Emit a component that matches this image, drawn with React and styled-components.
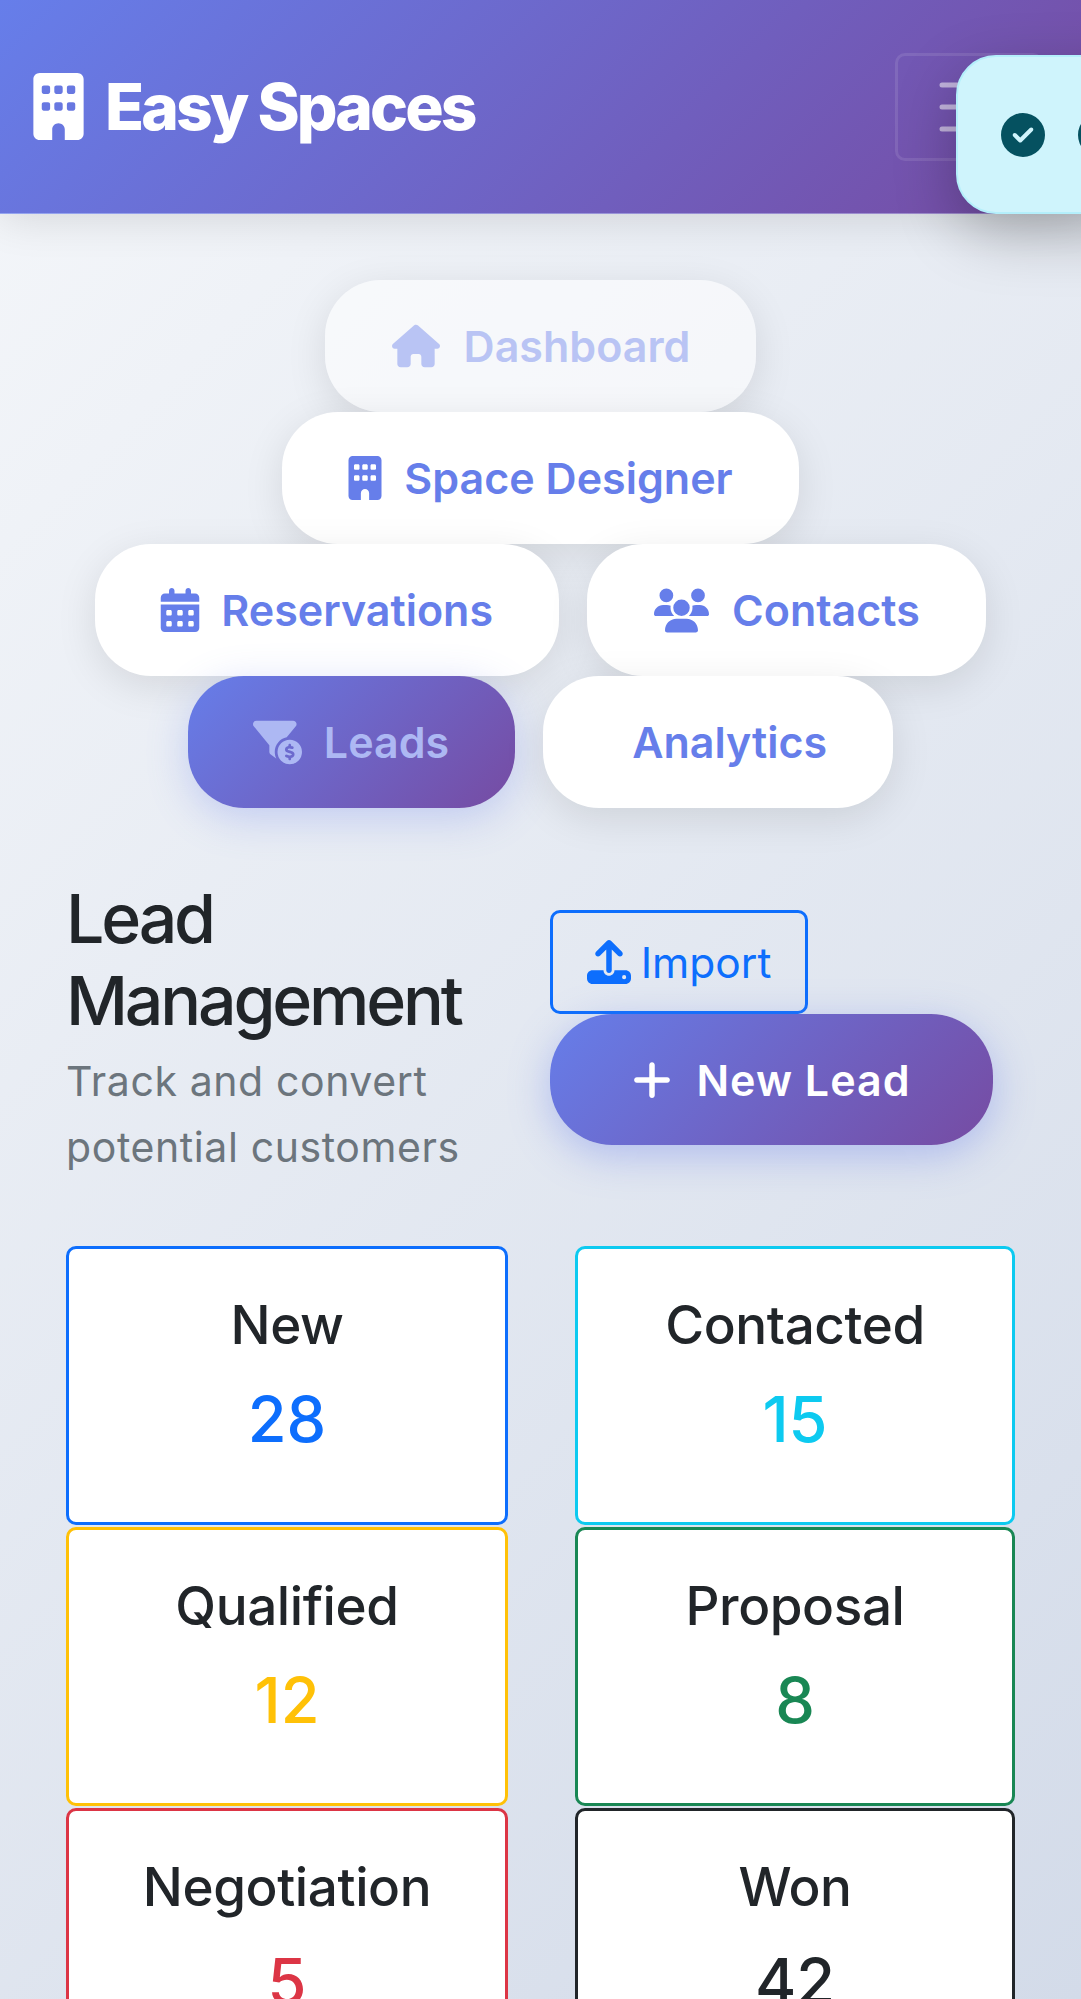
import React from 'react';
import styled, { createGlobalStyle } from 'styled-components';
import {
    FaBuilding,
    FaHouse,
    FaCalendarDays,
    FaUsers,
    FaFilterCircleDollar,
    FaUpload,
    FaPlus,
    FaCircleCheck,
} from 'react-icons/fa6';

const NAV_ITEMS = [
    { label: 'Dashboard', icon: <FaHouse />, state: 'fading', width: 50, size: 48 },
    { label: 'Space Designer', icon: <FaBuilding />, width: 33, size: 44 },
    { label: 'Reservations', icon: <FaCalendarDays />, width: 37, size: 44 },
    { label: 'Contacts', icon: <FaUsers />, width: 56, size: 55 },
    { label: 'Leads', icon: <FaFilterCircleDollar />, state: 'active', width: 47, size: 49 },
    { label: 'Analytics', icon: null, width: 0, size: 0 },
];

const STATS = [
    { label: 'New', value: 28, color: '#0d6efd' },
    { label: 'Contacted', value: 15, color: '#0dcaf0' },
    { label: 'Qualified', value: 12, color: '#ffc107' },
    { label: 'Proposal', value: 8, color: '#198754' },
    { label: 'Negotiation', value: 5, color: '#dc3545' },
    { label: 'Won', value: 42, color: '#212529' },
];

export default function App() {
    return (
        <Page>
            <GlobalStyle />
            <Header>
                <Brand><FaBuilding /><span>Easy Spaces</span></Brand>
                <Toggler>
                    <svg width="60" height="50" viewBox="0 0 60 50">
                        <path d="M3 3h54M3 25h54M3 47h54" stroke="rgba(255,255,255,.55)" strokeWidth="5" strokeLinecap="round" />
                    </svg>
                </Toggler>
                <Toast>
                    <FaCircleCheck />
                    <FaCircleCheck />
                </Toast>
            </Header>
            <Main>
                <Nav>
                    {NAV_ITEMS.map((item) => (
                        <Pill key={item.label} $state={item.state}>
                            <PillIcon $width={item.width} $size={item.size}>{item.icon}</PillIcon>
                            {item.label}
                        </Pill>
                    ))}
                </Nav>
                <TitleRow>
                    <div>
                        <Title>Lead Management</Title>
                        <Subtitle>Track and convert potential customers</Subtitle>
                    </div>
                    <Actions>
                        <ImportButton><FaUpload />Import</ImportButton>
                        <NewButton><FaPlus />New Lead</NewButton>
                    </Actions>
                </TitleRow>
                <Stats>
                    {STATS.map((stat) => (
                        <StatCard key={stat.label} $color={stat.color}>
                            <StatLabel>{stat.label}</StatLabel>
                            <StatValue $color={stat.color}>{stat.value}</StatValue>
                        </StatCard>
                    ))}
                </Stats>
            </Main>
        </Page>
    );
}

const GlobalStyle = createGlobalStyle`
    html, body {
        margin: 0;
        padding: 0;
    }
    * {
        box-sizing: border-box;
    }
`;
const Page = styled.div`
    position: relative;
    height: 1999px;
    overflow: hidden;
    font-family: 'Inter', 'Liberation Sans', sans-serif;
    color: #212529;
    background: linear-gradient(135deg, #f5f7fa 0%, #d3dbe9 100%);
`;
const Header = styled.header`
    position: relative;
    height: 214px;
    padding: 0 38px 0 33px;
    display: flex;
    align-items: center;
    justify-content: space-between;
    background: linear-gradient(135deg, #667eea 0%, #764ba2 100%);
    border-bottom: 1px solid rgba(255, 255, 255, 0.3);
    box-shadow: 0 5px 40px rgba(0, 0, 0, 0.12);
`;
const Brand = styled.div`
    display: flex;
    align-items: center;
    gap: 13px;
    color: #fff;
    font-size: 64px;
    font-weight: 800;
    letter-spacing: -2.9px;
    svg {
        height: 67px;
        width: 67px;
        margin-left: -8px;
    }
`;
const Toggler = styled.div`
    width: 148px;
    height: 108px;
    display: flex;
    align-items: center;
    justify-content: center;
    border: 3px solid rgba(255, 255, 255, 0.1);
    border-radius: 10px;
`;
const Toast = styled.div`
    position: absolute;
    top: 55px;
    left: 956px;
    width: 400px;
    height: 159px;
    padding-left: 43px;
    display: flex;
    align-items: center;
    gap: 33px;
    background: #cff4fc;
    border: 2px solid #b4effb;
    border-radius: 40px;
    color: #055160;
    font-size: 44px;
    box-shadow: 0 20px 60px rgba(0, 0, 0, 0.25);
    svg {
        flex: none;
    }
`;
const Main = styled.main`
    padding: 66px 66px 0;
`;
const Nav = styled.nav`
    display: flex;
    flex-wrap: wrap;
    justify-content: center;
    column-gap: 28px;
`;
const Pill = styled.a`
    height: 132px;
    padding: 0 66px;
    display: flex;
    align-items: center;
    border-radius: 56px;
    font-size: 43px;
    font-weight: 600;
    color: ${(p) => (p.$state === 'fading' ? '#b9c4f4' : p.$state === 'active' ? '#adb8f3' : '#667eea')};
    background: ${(p) => (p.$state === 'fading'
        ? 'rgba(255, 255, 255, 0.55)'
        : p.$state === 'active'
            ? 'linear-gradient(135deg, #667eea 0%, #764ba2 100%)'
            : '#fff')};
    box-shadow: ${(p) => (p.$state === 'active'
        ? '0 10px 40px rgba(102, 126, 234, 0.3)'
        : '0 10px 40px rgba(0, 0, 0, 0.1)')};
`;
const PillIcon = styled.span`
    width: ${(p) => p.$width}px;
    margin-right: 23px;
    display: flex;
    align-items: center;
    justify-content: center;
    svg {
        flex: none;
        width: ${(p) => p.$size}px;
        height: ${(p) => p.$size}px;
    }
`;
const TitleRow = styled.section`
    margin-top: 69px;
    display: flex;
    align-items: center;
    justify-content: space-between;
`;
const Title = styled.h2`
    width: 440px;
    margin: 0 0 7px;
    font-size: 68px;
    font-weight: 500;
    line-height: 82px;
    letter-spacing: -3.2px;
`;
const Subtitle = styled.p`
    width: 440px;
    margin: 0;
    font-size: 41px;
    line-height: 66px;
    letter-spacing: 0.6px;
    color: #6c757d;
`;
const Actions = styled.div`
    width: 465px;
    margin-top: -2px;
    display: flex;
    flex-direction: column;
    align-items: flex-start;
`;
const ImportButton = styled.button`
    height: 104px;
    width: 258px;
    padding: 0;
    display: flex;
    align-items: center;
    justify-content: center;
    gap: 10px;
    background: transparent;
    border: 3px solid #0d6efd;
    border-radius: 10px;
    color: #0d6efd;
    font: 400 42.5px 'Inter', sans-serif;
    svg {
        height: 44px;
        width: auto;
    }
`;
const NewButton = styled.button`
    height: 131px;
    width: 443px;
    padding: 0 2px 0 0;
    display: flex;
    align-items: center;
    justify-content: center;
    gap: 22px;
    background: linear-gradient(135deg, #667eea 0%, #764ba2 100%);
    border: 0;
    border-radius: 62px;
    color: #fff;
    font: 600 43px 'Inter', sans-serif;
    letter-spacing: 1px;
    box-shadow: 0 10px 40px rgba(102, 126, 234, 0.4);
    svg {
        height: 44px;
        width: auto;
    }
`;
const Stats = styled.section`
    margin-top: 66px;
    display: grid;
    grid-template-columns: 442fr 440fr;
    column-gap: 67px;
    row-gap: 2px;
`;
const StatCard = styled.div`
    height: 279px;
    padding-top: 45px;
    text-align: center;
    background: #fff;
    border: 3px solid ${(p) => p.$color};
    border-radius: 10px;
`;
const StatLabel = styled.h5`
    margin: 0 0 26px;
    font-size: 53px;
    font-weight: 500;
    line-height: 62px;
    letter-spacing: -0.4px;
`;
const StatValue = styled.div`
    font-size: 63px;
    font-weight: 500;
    line-height: 74px;
    color: ${(p) => p.$color};
`;
